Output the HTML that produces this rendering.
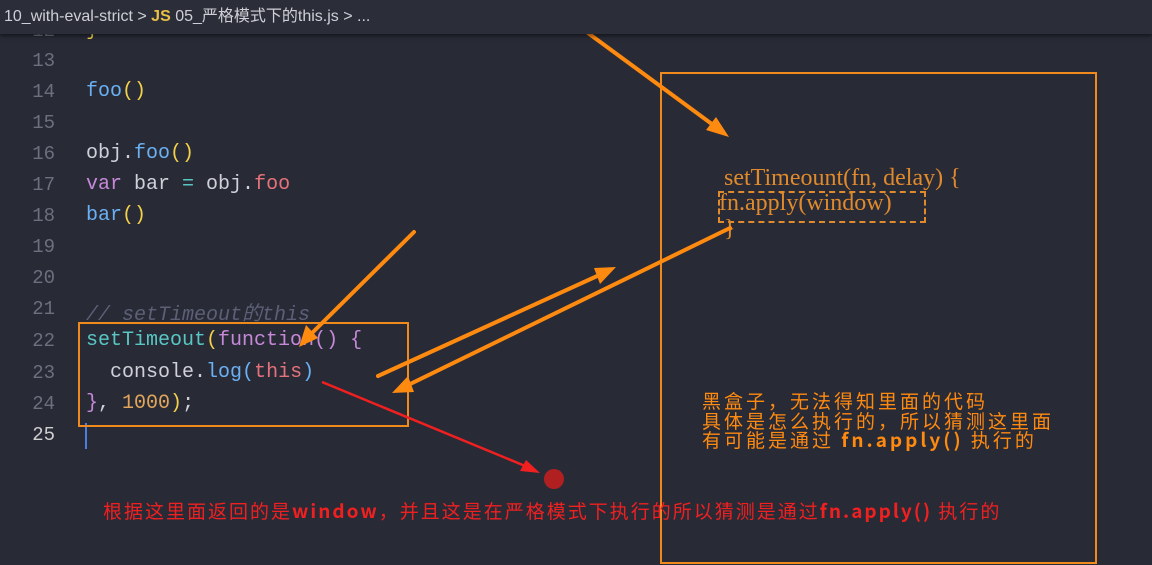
<!DOCTYPE html>
<html><head><meta charset="utf-8"><style>
body{margin:0;width:1152px;height:565px;background:#282a36;overflow:hidden;position:relative;font-family:"Liberation Mono","Noto Sans CJK SC",monospace}
.bc{position:absolute;left:0;top:0;width:1152px;height:34px;background:#2b2d39;box-shadow:0 2px 4px rgba(0,0,0,.5);font:16px "Liberation Sans","Noto Sans CJK SC",sans-serif;color:#cfd0d6;line-height:34px;padding-left:4px;box-sizing:border-box;z-index:2}
.ln{position:absolute;left:0;width:55px;text-align:right;color:#6c6f7e;font-size:19px}
.cd{position:absolute;left:86px;font-size:20px;color:#cfd0d8;white-space:pre}
.b{color:#6ab0f3}.y{color:#f2d04a}.p{color:#c689d8}.r{color:#e5727b}.c{color:#5c6076;font-style:italic}.t{color:#58c7c4}.o{color:#e0a55a}
.s{font-family:"Liberation Serif",serif;color:#e08a2c;position:absolute;font-size:24px}
.cn{position:absolute;color:#ff8a10;font:19px/20px "Noto Sans CJK SC",sans-serif;letter-spacing:3px}
</style></head><body>
<div class="bc">10_with-eval-strict &gt; <b style="color:#e9c046">JS</b> 05_严格模式下的this.js &gt; ...</div>
<div class="ln" style="top:20px">12</div><div class="cd y" style="top:19px">}</div>
<div class="ln" style="top:50px">13</div>
<div class="ln" style="top:81px">14</div><div class="cd" style="top:80px"><span class="b">foo</span><span class="y">()</span></div>
<div class="ln" style="top:112px">15</div>
<div class="ln" style="top:143px">16</div><div class="cd" style="top:142px">obj.<span class="b">foo</span><span class="y">()</span></div>
<div class="ln" style="top:174px">17</div><div class="cd" style="top:173px"><span class="p">var</span> bar <span class="t">=</span> obj.<span class="r">foo</span></div>
<div class="ln" style="top:205px">18</div><div class="cd" style="top:204px"><span class="b">bar</span><span class="y">()</span></div>
<div class="ln" style="top:236px">19</div>
<div class="ln" style="top:267px">20</div>
<div class="ln" style="top:298px">21</div><div class="cd c" style="top:297px">// setTimeout的this</div>
<div class="ln" style="top:330px">22</div><div class="cd" style="top:329px"><span class="t">setTimeout</span><span class="y">(</span><span class="p">function</span><span class="p">() {</span></div>
<div class="ln" style="top:362px">23</div><div class="cd" style="top:361px">  console.<span class="b">log</span><span class="b">(</span><span class="r">this</span><span class="b">)</span></div>
<div class="ln" style="top:393px">24</div><div class="cd" style="top:392px"><span class="p">}</span>, <span class="o">1000</span><span class="y">)</span>;</div>
<div class="ln" style="top:424px;color:#d0d0d0">25</div>
<div style="position:absolute;left:85px;top:423px;width:2px;height:26px;background:#4a7fe0"></div>
<div style="position:absolute;left:78px;top:322px;width:327px;height:101px;border:2px solid #f08a1c"></div>
<div style="position:absolute;left:660px;top:72px;width:433px;height:488px;border:2px solid #f08a1c"></div>
<div class="s" style="left:724px;top:165px">setTimeount(fn, delay) {</div>
<div class="s" style="left:719px;top:190px">fn.apply(window)</div>
<div class="s" style="left:724px;top:216px">}</div>
<div style="position:absolute;left:718px;top:191px;width:204px;height:28px;border:2px dashed #e08a2c"></div>
<div class="cn" style="left:702px;top:391px;line-height:19.5px">黑盒子，无法得知里面的代码<br>具体是怎么执行的，所以猜测这里面<br>有可能是通过 <b>fn.apply()</b> 执行的</div>
<div class="cn" style="left:103px;top:501px;color:#f02020;letter-spacing:2px">根据这里面返回的是<b>window</b>，并且这是在严格模式下执行的所以猜测是通过<b>fn.apply()</b> 执行的</div>
<div style="position:absolute;left:544px;top:469px;width:20px;height:20px;border-radius:50%;background:#b02020"></div>
<svg width="1152" height="565" style="position:absolute;left:0;top:0">
<g stroke="#ff8a10" stroke-width="4" fill="#ff8a10" stroke-linecap="round">
<line x1="588" y1="33" x2="720" y2="130"/><polygon points="729,137 706,130 716,117" stroke="none"/>
<line x1="414" y1="232" x2="306" y2="339"/><polygon points="299,347 306,325 318,338" stroke="none"/>
<line x1="378" y1="376" x2="606" y2="272"/><polygon points="616,267 600,284 594,268" stroke="none"/>
<line x1="730" y1="228" x2="402" y2="388"/><polygon points="392,393 408,376 414,392" stroke="none"/>
</g>
<line x1="322" y1="382" x2="530" y2="468" stroke="#f02020" stroke-width="2.5"/><polygon points="540,473 520,471 526,460" fill="#f02020"/>
</svg>
</body></html>
